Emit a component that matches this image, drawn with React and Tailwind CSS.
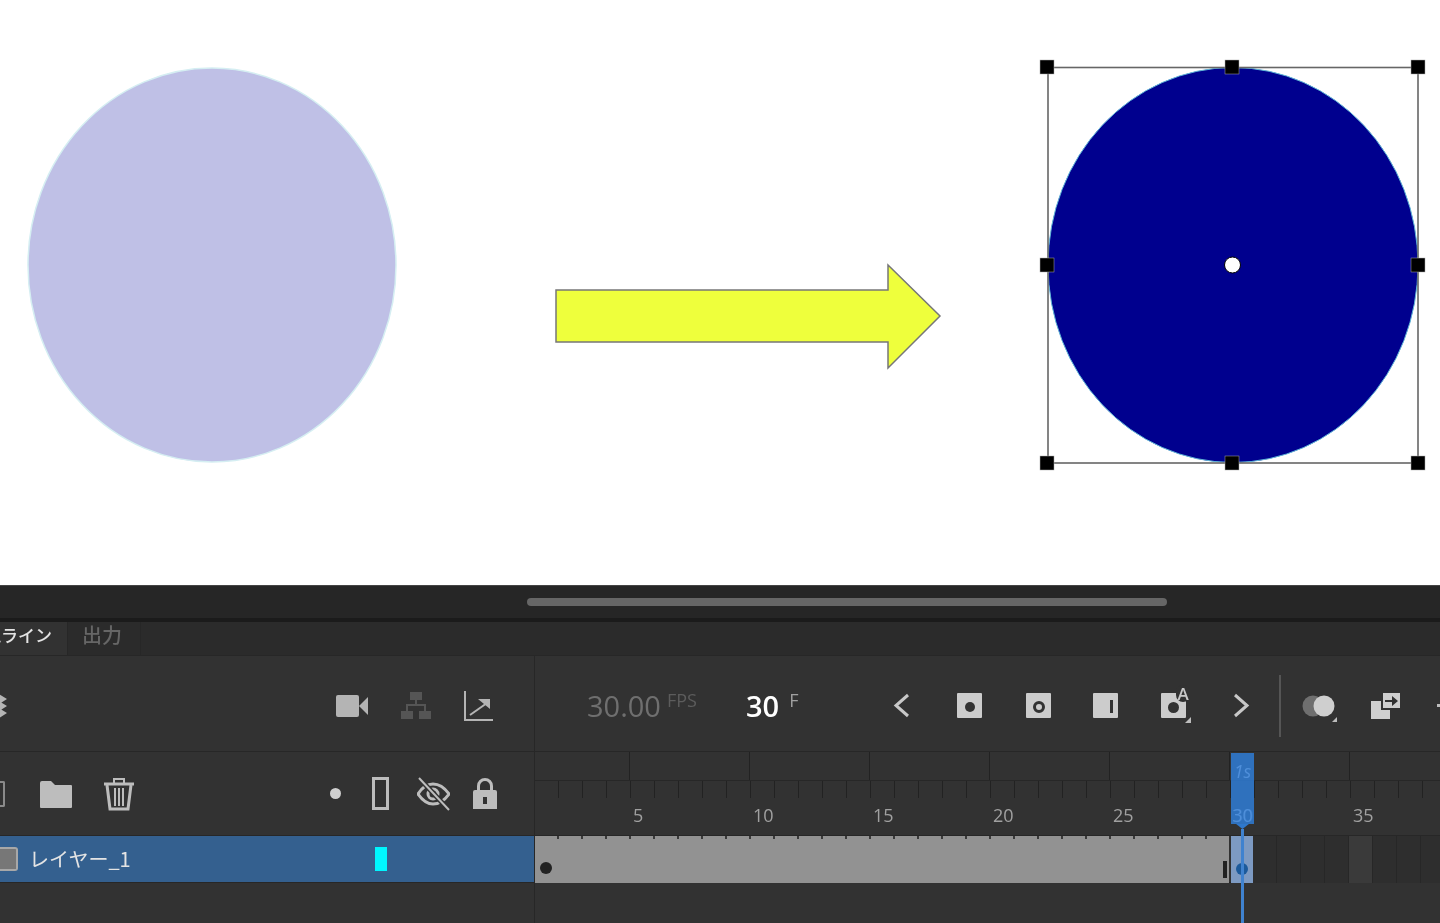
import React from 'react';

const FONT = { fontFamily: '"Open Sans", "Noto Sans", sans-serif' };
const JP = { fontFamily: '"Noto Sans CJK JP", sans-serif' };
const FRAMES = Array.from({ length: 38 }, (_, i) => i + 1);
const LABELS = [5, 10, 15, 20, 25, 30, 35];

function Stage() {
  return (
    <svg width="1440" height="585" viewBox="0 0 1440 585" className="block">
      <ellipse cx="212" cy="265" rx="184" ry="197" fill="#bfc0e6" stroke="#d5eef2" strokeWidth="1.5" />
      <path d="M556 290H888V265L940 316L888 368V342H556Z" fill="#eeff3c" stroke="#777" strokeWidth="1.5" />
      <ellipse cx="1233" cy="265" rx="185" ry="197.5" fill="#00008e" stroke="#5fb6d8" strokeWidth="1" />
      <rect x="1048" y="67.5" width="370" height="395.5" fill="none" stroke="#666" strokeWidth="1.6" />
      {[[1047, 67], [1232, 67], [1418, 67], [1047, 265], [1418, 265], [1047, 463], [1232, 463], [1418, 463]].map(([x, y]) => (
        <rect key={`${x}-${y}`} x={x - 7} y={y - 7} width="14" height="14" fill="#000" stroke="#aaa" strokeWidth="0.5" />
      ))}
      <circle cx="1232.5" cy="265" r="8" fill="#fff" stroke="#000" strokeWidth="1" />
    </svg>
  );
}

function Camera() {
  return (
    <svg width="33" height="24" viewBox="0 0 33 24" fill="#b4b4b4">
      <rect x="0" y="1" width="23" height="22" rx="2" />
      <path d="M23 12L32 3V21Z" />
    </svg>
  );
}

function Tree() {
  return (
    <svg width="30" height="27" viewBox="0 0 30 27" fill="#555">
      <rect x="9" y="0" width="12" height="8" />
      <rect x="0" y="19" width="12" height="8" />
      <rect x="18" y="19" width="12" height="8" />
      <path d="M14 8h2v4h9v7h-2v-5H7v5H5v-7h9z" />
    </svg>
  );
}

function Graph() {
  return (
    <svg width="31" height="32" viewBox="0 0 31 32" fill="none" stroke="#b4b4b4" strokeWidth="2">
      <path d="M2 1V30H30" />
      <path d="M7 25L24 13" />
      <path d="M15 9H27V19Z" fill="#b4b4b4" strokeWidth="0" />
    </svg>
  );
}

function Folder() {
  return (
    <svg width="34" height="28" viewBox="0 0 34 28" fill="#bdbdbd">
      <path d="M1 3a2 2 0 012-2h9l4 4h16a1 1 0 011 1v21a1 1 0 01-1 1H2a1 1 0 01-1-1z" />
    </svg>
  );
}

function Trash() {
  return (
    <svg width="30" height="34" viewBox="0 0 30 34" fill="none" stroke="#bdbdbd" strokeWidth="2">
      <path d="M0 7H30" strokeWidth="3" />
      <path d="M10 6V2H20V6" />
      <path d="M3 8L6 32H24L27 8" strokeWidth="3" />
      <path d="M11 11V29M15 11V29M19 11V29" />
    </svg>
  );
}

function EyeOff() {
  return (
    <svg width="33" height="34" viewBox="0 0 33 34" fill="none" stroke="#bdbdbd" strokeWidth="3">
      <path d="M1 17C6 9 11 7 16 7C22 7 27 10 32 17C27 24 22 27 16 27C11 27 6 24 1 17Z" />
      <circle cx="16" cy="17" r="5" />
      <path d="M2 1L32 33" stroke="#323232" strokeWidth="5" />
      <path d="M2 1L32 33" strokeWidth="2" />
    </svg>
  );
}

function Lock() {
  return (
    <svg width="26" height="33" viewBox="0 0 26 33" fill="#bdbdbd">
      <path d="M5 14V9a8 8 0 0116 0v5h-3V9a5 5 0 00-10 0v5z" />
      <path d="M1 15a2 2 0 012-2h20a2 2 0 012 2v17H1z" />
      <rect x="11" y="20" width="4" height="7" fill="#323232" />
    </svg>
  );
}

function KeyBox({ children }) {
  return (
    <div className="relative flex h-[25px] w-[25px] items-center justify-center rounded-[1px] bg-[#cccccc]">
      {children}
    </div>
  );
}

function Chevron({ flip }) {
  return (
    <svg width="17" height="25" viewBox="0 0 17 25" fill="none" stroke="#c8c8c8" strokeWidth="3" className={flip ? 'rotate-180' : ''}>
      <path d="M15 2L3 12.5L15 23" />
    </svg>
  );
}

function Onion() {
  return (
    <svg width="37" height="28" viewBox="0 0 37 28">
      <circle cx="12" cy="11" r="10.5" fill="#6f6f6f" />
      <circle cx="23" cy="11" r="10.5" fill="#cfcfcf" />
      <path d="M36 22V27H31Z" fill="#bdbdbd" />
    </svg>
  );
}

function Swap() {
  return (
    <svg width="30" height="28" viewBox="0 0 30 28">
      <rect x="0" y="9" width="19" height="18" fill="#cfcfcf" />
      <rect x="11" y="0" width="19" height="17" fill="#cfcfcf" stroke="#323232" strokeWidth="2" />
      <path d="M14 8h7V4l6 5-6 5v-4h-7z" fill="#323232" />
    </svg>
  );
}

function PanelToolbar() {
  return (
    <div className="flex h-[96px] border-b border-[#272727]">
      <div className="flex w-[535px] shrink-0 items-center overflow-hidden border-r border-[#272727] pr-[40px] pt-[4px]">
        <svg width="8" height="24" viewBox="0 0 8 24" fill="#b4b4b4" className="-ml-px">
          <path d="M0 0l8 5-8 5zM0 7l8 5-8 5zM0 14l8 5-8 5z" />
        </svg>
        <div className="ml-auto flex items-center gap-[32px]">
          <Camera />
          <Tree />
          <Graph />
        </div>
      </div>
      <div className="flex flex-1 items-center overflow-hidden pl-[52px] pt-[4px]" style={FONT}>
        <span className="text-[29px] leading-none text-[#6f6f6f]">30.00</span>
        <span className="mb-[12px] ml-[6px] text-[18px] leading-none text-[#5c5c5c]">FPS</span>
        <span className="ml-[49px] text-[29px] font-semibold leading-none text-white">30</span>
        <span className="mb-[12px] ml-[10px] text-[18px] leading-none text-[#a0a0a0]">F</span>
        <div className="ml-[95px]"><Chevron /></div>
        <div className="ml-[47px]">
          <KeyBox><div className="mt-[3px] h-[10px] w-[10px] rounded-full bg-[#323232]" /></KeyBox>
        </div>
        <div className="ml-[44px]">
          <KeyBox><div className="mt-[3px] h-[12px] w-[12px] rounded-full border-[3px] border-[#323232]" /></KeyBox>
        </div>
        <div className="ml-[42px]">
          <KeyBox><div className="ml-[11px] mt-[2px] h-[13px] w-[3px] bg-[#323232]" /></KeyBox>
        </div>
        <div className="relative ml-[43px]">
          <KeyBox><div className="mt-[3px] h-[11px] w-[11px] rounded-full bg-[#323232]" /></KeyBox>
          <span className="absolute -top-[8px] left-[15px] rounded-full bg-[#323232] px-px text-[17px] font-semibold leading-none text-[#c8c8c8]">A</span>
          <svg width="6" height="6" viewBox="0 0 6 6" className="absolute left-[24px] top-[24px]"><path d="M6 0V6H0Z" fill="#bdbdbd" /></svg>
        </div>
        <div className="ml-[47px]"><Chevron flip /></div>
        <div className="ml-[29px] h-[62px] w-[2px] shrink-0 bg-[#555]" />
        <div className="ml-[20px] mt-[6px] shrink-0"><Onion /></div>
        <div className="ml-[33px] shrink-0"><Swap /></div>
        <div className="ml-[36px] h-[3px] w-[8px] shrink-0 bg-[#bdbdbd]" />
      </div>
    </div>
  );
}

function LayerTools() {
  return (
    <div className="flex h-[83px] w-[535px] shrink-0 items-center border-r border-[#272727]">
      <div className="h-[26px] w-[5px] rounded-r-[2px] border-2 border-l-0 border-[#8a8a8a]" />
      <div className="ml-[34px]"><Folder /></div>
      <div className="ml-[31px]"><Trash /></div>
      <div className="ml-[196px] h-[11px] w-[11px] rounded-full bg-[#cfcfcf]" />
      <div className="ml-[31px] h-[33px] w-[17px] border-[3px] border-[#bdbdbd]" />
      <div className="ml-[28px]"><EyeOff /></div>
      <div className="ml-[22px]"><Lock /></div>
    </div>
  );
}

function Ruler() {
  return (
    <div className="flex-1 overflow-hidden" style={FONT}>
      <div className="flex h-[29px] border-b border-[#272727]">
        <div className="h-full w-[95px] shrink-0 border-r border-[#222]" />
        {LABELS.map((n) => (
          <div key={n} className="h-full w-[120px] shrink-0 border-r border-[#222]" />
        ))}
      </div>
      <div className="flex h-[17px]">
        {FRAMES.map((f) => (
          <div key={f} className="h-full w-[24px] shrink-0 border-r border-[#222]" />
        ))}
      </div>
      <div className="flex h-[33px] items-center pl-[97px]">
        {LABELS.map((n) => (
          <span key={n} className="w-[120px] shrink-0 pl-px text-[18px] leading-none text-[#a0a0a0]">{n}</span>
        ))}
      </div>
    </div>
  );
}

function FrameSpan() {
  return (
    <div className="flex h-[47px] flex-1 overflow-hidden">
      <div className="relative flex h-full w-[694px] shrink-0 items-end bg-[#929292]">
        <div className="absolute left-0 top-0 flex h-[3px]">
          {FRAMES.slice(0, 28).map((f) => (
            <div key={f} className="h-full w-[24px] shrink-0 border-r-2 border-[#3a3a3a]" />
          ))}
        </div>
        <div className="mb-[9px] ml-[5px] h-[12px] w-[12px] rounded-full bg-[#222]" />
        <div className="mb-[5px] ml-auto mr-[2px] h-[17px] w-[4px] bg-[#222]" />
      </div>
      <div className="ml-[2px] flex h-[48px] w-[22px] shrink-0 items-end justify-center bg-[#7d9ac2] pb-[9px]">
        <div className="h-[12px] w-[12px] rounded-full bg-[#1c5a9b]" />
      </div>
      {FRAMES.slice(0, 8).map((f) => (
        <div key={f} className={`h-full w-[24px] shrink-0 border-r border-[#272727] ${f === 5 ? 'bg-[#3a3a3a]' : 'bg-[#2e2e2e]'}`} />
      ))}
    </div>
  );
}

export default function App() {
  return (
    <div className="relative h-[923px] w-[1440px] overflow-hidden bg-[#323232] blur-[0.5px]">
      <div className="h-[585px] bg-white">
        <Stage />
      </div>
      <div className="flex h-[33px] items-center border-t border-[#444] bg-[#262626] pl-[527px]">
        <div className="h-[8px] w-[640px] rounded-full bg-[#666]" />
      </div>
      <div className="h-[4px] bg-[#1b1b1b]" />
      <div className="flex h-[34px] border-b border-[#272727] bg-[#2b2b2b]" style={JP}>
        <div className="flex w-[68px] justify-end overflow-hidden whitespace-nowrap border-r border-[#272727] bg-[#323232] pr-[15px] text-[17px] font-medium leading-[26px] text-[#e4e4e4]">
          タイムライン
        </div>
        <div className="w-[73px] border-r border-[#272727] pl-[14px] text-[20px] font-medium leading-[26px] text-[#666]">出力</div>
      </div>
      <PanelToolbar />
      <div className="flex">
        <LayerTools />
        <Ruler />
      </div>
      <div className="flex h-[48px] border-y border-[#272727]">
        <div className="flex w-[535px] shrink-0 items-center border-r border-[#272727] bg-[#34608f]">
          <div className="h-[24px] w-[18px] rounded-r-[3px] border-2 border-l-0 border-[#a8a8a8] bg-[#777]" />
          <span className="ml-[11px] w-[104px] whitespace-nowrap text-[20px] text-[#e4e4e4]" style={JP}>レイヤー_1</span>
          <div className="ml-[242px] h-[24px] w-[12px] bg-[#00f6ff]" />
        </div>
        <FrameSpan />
      </div>
      <div className="flex h-[40px]">
        <div className="w-[535px] border-r border-[#272727]" />
      </div>

      {/* playhead lies over the ruler and frames */}
      <div className="absolute left-[1231px] top-[753px] flex h-[170px] w-[23px] flex-col items-center">
        <div className="flex h-[72px] w-full flex-col items-center bg-[#2f78cc]/90 text-[18px] leading-none text-[#4f8fda]" style={FONT}>
          <span className="mt-[9px] italic">1s</span>
          <span className="mt-[26px]">30</span>
        </div>
        <svg width="23" height="9" viewBox="0 0 23 9" className="block"><path d="M0 0H23L11.5 9Z" fill="#2f78cc" /></svg>
        <div className="h-full w-[3px] bg-[#3f82cf]" />
      </div>
    </div>
  );
}
